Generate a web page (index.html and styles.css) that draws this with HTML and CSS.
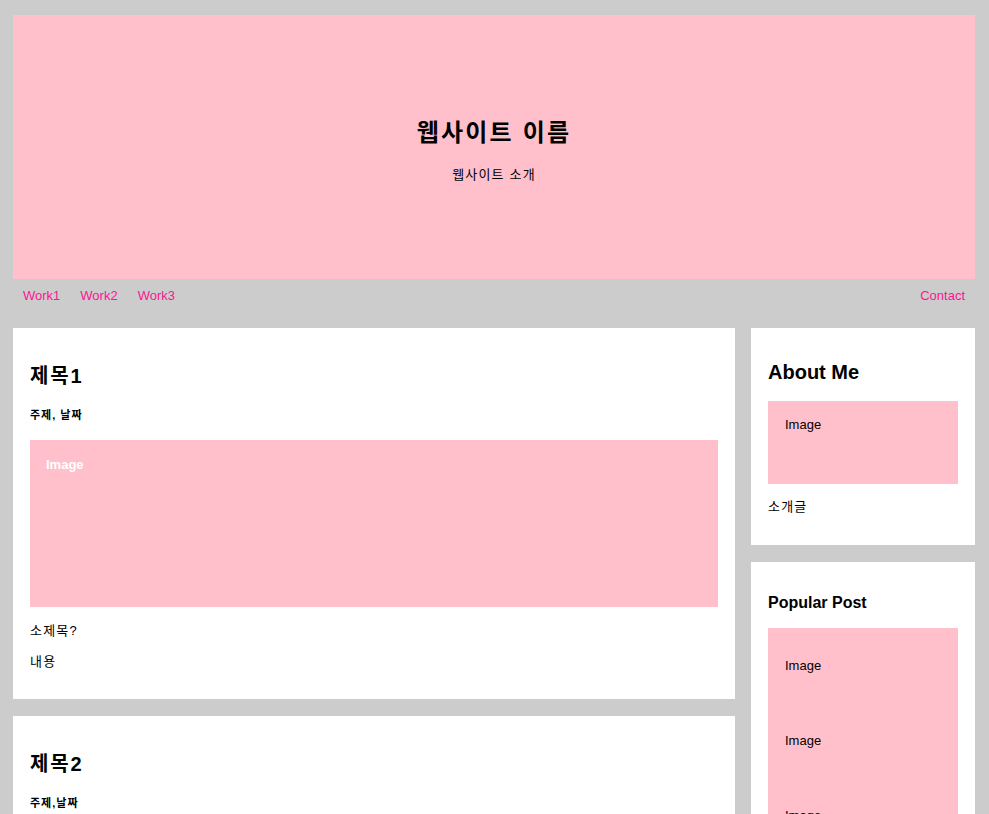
FILE: index.html
```html
<!DOCTYPE html>
<html lang="ko">
<head>
<meta charset="utf-8">
<title>웹사이트 이름</title>
<link rel="stylesheet" href="styles.css">
</head>
<body>
<div class="page">
  <header class="header">
    <h1 class="site-title ko">웹사이트 이름</h1>
    <p class="site-desc ko">웹사이트 소개</p>
  </header>
  <nav class="topnav">
    <a href="#" class="nav-link">Work1</a>
    <a href="#" class="nav-link">Work2</a>
    <a href="#" class="nav-link">Work3</a>
    <a href="#" class="nav-link nav-right">Contact</a>
  </nav>
  <div class="row">
    <div class="leftcol">
      <div class="card">
        <h2 class="post-title ko">제목1</h2>
        <h5 class="post-meta ko">주제, 날짜</h5>
        <div class="post-image">Image</div>
        <p class="post-sub ko">소제목?</p>
        <p class="post-body ko">내용</p>
      </div>
      <div class="card">
        <h2 class="post-title ko">제목2</h2>
        <h5 class="post-meta ko">주제,날짜</h5>
        <div class="post-image">Image</div>
        <p class="post-sub ko">소제목?</p>
        <p class="post-body ko">내용</p>
      </div>
    </div>
    <div class="rightcol">
      <div class="card">
        <h2 class="side-title">About Me</h2>
        <div class="about-image">Image</div>
        <p class="about-text ko">소개글</p>
      </div>
      <div class="card">
        <h3 class="popular-title">Popular Post</h3>
        <div class="popular-list">
          <div class="popular-item">Image</div>
          <div class="popular-item">Image</div>
          <div class="popular-item">Image</div>
        </div>
      </div>
    </div>
  </div>
</div>
</body>
</html>
```

FILE: styles.css
```css
* {
  box-sizing: border-box;
}

html, body {
  margin: 0;
  padding: 0;
}

body {
  background: #cccccc;
  font-family: "Liberation Sans", Arial, "Noto Sans CJK KR", sans-serif;
  color: #000;
  font-size: 13px;
}

.ko {
  letter-spacing: 0.09em;
}

.page {
  padding: 15px 14px 20px 13px;
}

.header {
  background: #ffc0cb;
  text-align: center;
  padding: 104px 0 96px;
}

.site-title {
  margin: 0;
  font-size: 24px;
  line-height: 28px;
  font-weight: bold;
}

.site-desc {
  margin: 20px 0 0;
  font-size: 13px;
  line-height: 16px;
}

.topnav {
  display: flex;
}

.nav-link {
  display: block;
  color: #ff1493;
  text-decoration: none;
  font-size: 13px;
  line-height: 16px;
  padding: 9px 10px 7px;
}

.nav-right {
  margin-left: auto;
}

.row {
  display: grid;
  grid-template-columns: 722px 1fr;
  column-gap: 16px;
  margin-top: 17px;
  align-items: start;
}

.leftcol,
.rightcol {
  display: flex;
  flex-direction: column;
  gap: 17px;
}

.card {
  background: #fff;
  padding: 17px;
}

.post-title {
  margin: 19px 0 0;
  font-size: 20px;
  line-height: 24px;
  font-weight: bold;
}

.post-meta {
  margin: 21px 0 0;
  font-size: 11px;
  line-height: 13px;
  font-weight: bold;
}

.post-image {
  margin-top: 18px;
  height: 167px;
  background: #ffc0cb;
  color: #fff;
  font-weight: bold;
  font-size: 13px;
  line-height: 15px;
  padding: 17px 16px;
}

.post-sub {
  margin: 16px 0 0;
  line-height: 16px;
}

.post-body {
  margin: 15px 0 12px;
  line-height: 16px;
}

.side-title {
  margin: 15px 0 0;
  font-size: 20px;
  line-height: 24px;
  font-weight: bold;
}

.about-image {
  margin-top: 17px;
  height: 83px;
  background: #ffc0cb;
  font-size: 13px;
  line-height: 15px;
  padding: 16px 17px;
}

.about-text {
  margin: 15px 0 13px;
  line-height: 16px;
}

.popular-title {
  margin: 14px 0 0;
  font-size: 16px;
  line-height: 19px;
  font-weight: bold;
}

.popular-list {
  margin-top: 16px;
  background: #ffc0cb;
}

.popular-item {
  height: 75px;
  padding: 30px 17px;
  font-size: 13px;
  line-height: 15px;
}
```
